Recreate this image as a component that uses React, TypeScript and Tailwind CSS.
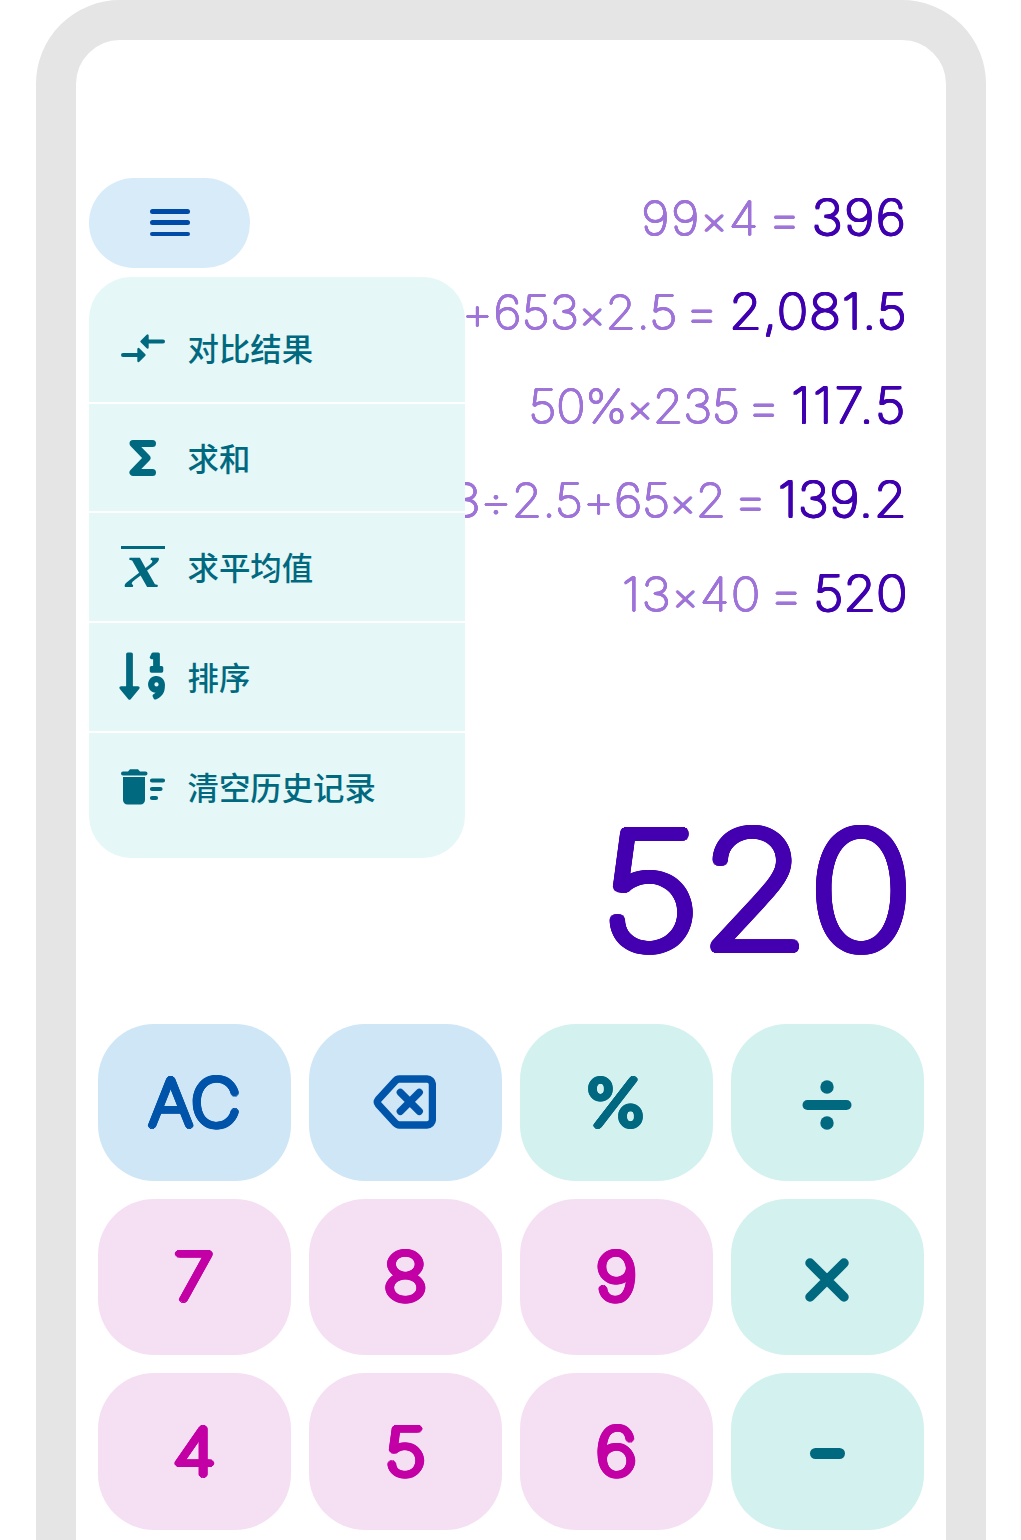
import type { ReactNode } from "react";
import { FaSortNumericDown } from "react-icons/fa";

type HistoryItem = { expr: string; result: string; exprTrack: string; resultTrack: string };

const history: HistoryItem[] = [
  { expr: "99×4", result: "396", exprTrack: "tracking-[1.700px]", resultTrack: "tracking-[1.600px]" },
  { expr: "+653×2.5", result: "2,081.5", exprTrack: "tracking-[0.200px]", resultTrack: "tracking-[0.900px]" },
  { expr: "50%×235", result: "117.5", exprTrack: "tracking-[-0.300px]", resultTrack: "tracking-[2.200px]" },
  { expr: "3÷2.5+65×2", result: "139.2", exprTrack: "tracking-[-0.200px]", resultTrack: "tracking-[0.700px]" },
  { expr: "13×40", result: "520", exprTrack: "tracking-[1.500px]", resultTrack: "tracking-[0px]" },
];

/** Thickens hairline glyphs evenly in every direction, which gives them rounded stroke ends. */
function roundedWeight(radius: number) {
  const rings = radius > 2.5 ? [radius, radius * 0.5] : [radius];
  const steps = radius > 4 ? 32 : radius > 2 ? 16 : 12;
  return rings
    .flatMap((r) =>
      Array.from({ length: steps }, (_, i) => {
        const a = (i / steps) * Math.PI * 2;
        return `${(Math.cos(a) * r).toFixed(2)}px ${(Math.sin(a) * r).toFixed(2)}px 0`;
      }),
    )
    .join(",");
}

const hairline = roundedWeight(0.95);
const regular = roundedWeight(1.3);
const medium = roundedWeight(3.2);
const display = roundedWeight(5.2);

function Expression({ value }: { value: string }) {
  return (
    <>
      {value.split(/([×÷+])/).filter(Boolean).map((part, i) =>
        part === "×" ? (
          <span key={i} className="inline-block -translate-y-px text-[38px]">×</span>
        ) : part === "+" || part === "÷" ? (
          <span key={i} className="inline-block translate-y-px">{part}</span>
        ) : (
          <span key={i}>{part}</span>
        ),
      )}
    </>
  );
}

function CompareIcon() {
  return (
    <svg width="46" height="32" viewBox="0 0 46 32" fill="currentColor" stroke="currentColor" strokeLinecap="round" strokeLinejoin="round">
      <path d="M26 9.500H43M3 23H20" strokeWidth="4" fill="none" />
      <path d="M21.500 9.500L27.500 3.500V15.500zM24.500 23L18.500 17V29z" strokeWidth="2.400" />
    </svg>
  );
}

function SumIcon() {
  return (
    <svg width="46" height="40" viewBox="0 0 46 40" fill="none" stroke="currentColor" strokeWidth="7" strokeLinecap="round" strokeLinejoin="round">
      <path d="M32.500 5.500H13L27 20L13 34.500H32.500" />
    </svg>
  );
}

function MeanIcon() {
  return (
    <span className="flex h-[42px] w-[44px] flex-col items-center border-t-[3.500px] border-current">
      <span className="-mt-[6px] inline-block scale-x-110 font-['Liberation_Serif',serif] text-[64px] font-bold italic leading-[46px]">x</span>
    </span>
  );
}

function TrashIcon() {
  return (
    <svg width="46" height="38" viewBox="0 0 46 38" fill="currentColor">
      <path d="M3 3.500H8L10 1.200H18L20 3.500H25.500a2 2 0 0 1 0 4H3a2 2 0 0 1 0-4z" />
      <path d="M3 9H25V32a4.500 4.500 0 0 1-4.500 4.500H7.500A4.500 4.500 0 0 1 3 32z" />
      <path d="M32 12.500H43M32 21H40.500M32 30H36" stroke="currentColor" strokeWidth="4.200" strokeLinecap="round" />
    </svg>
  );
}

const menu: { label: string; icon: ReactNode }[] = [
  { label: "对比结果", icon: <CompareIcon /> },
  { label: "求和", icon: <SumIcon /> },
  { label: "求平均值", icon: <MeanIcon /> },
  { label: "排序", icon: <FaSortNumericDown className="h-[54px] w-[48px] shrink-0 -translate-y-px" /> },
  { label: "清空历史记录", icon: <TrashIcon /> },
];

function BackspaceIcon() {
  return (
    <svg className="-translate-x-px" width="63" height="56" viewBox="0 0 63 56" fill="none" stroke="currentColor" strokeWidth="7.300" strokeLinecap="round" strokeLinejoin="round">
      <path d="M26.500 5H54a5.400 5.400 0 0 1 5.400 5.400V45.600a5.400 5.400 0 0 1-5.400 5.400H26.500a5 5 0 0 1-4-1.800L5.300 30.500a4 4 0 0 1 0-5L22.500 6.800a5 5 0 0 1 4-1.800z" />
      <path d="M27.300 18.300L46.300 37.300M46.300 18.300L27.300 37.300" />
    </svg>
  );
}

function DivideIcon() {
  return (
    <svg className="translate-y-[3px]" width="50" height="52" viewBox="0 0 50 52" fill="currentColor">
      <path d="M5.500 26H44.500" stroke="currentColor" strokeWidth="10" strokeLinecap="round" />
      <circle cx="25" cy="8" r="6.700" />
      <circle cx="25" cy="44" r="6.700" />
    </svg>
  );
}

function TimesIcon() {
  return (
    <svg className="translate-y-[3px]" width="46" height="46" viewBox="0 0 46 46" stroke="currentColor" strokeWidth="9.500" strokeLinecap="round">
      <path d="M6 6L40 40M40 6L6 40" />
    </svg>
  );
}

function MinusIcon() {
  return <span className="h-[11px] w-[35px] translate-y-[2px] rounded-full bg-current" />;
}

const blue = "bg-[#cee6f6] text-[#0054aa]";
const teal = "bg-[#d3f1ee] text-[#006980]";
const pink = "bg-[#f5e0f3] text-[#c300a5]";

const keys: { name: string; face: ReactNode; tone: string }[] = [
  { name: "clear", face: "AC", tone: blue },
  { name: "backspace", face: <BackspaceIcon />, tone: blue },
  { name: "percent", face: "%", tone: teal },
  { name: "divide", face: <DivideIcon />, tone: teal },
  { name: "7", face: "7", tone: pink },
  { name: "8", face: "8", tone: pink },
  { name: "9", face: "9", tone: pink },
  { name: "multiply", face: <TimesIcon />, tone: teal },
  { name: "4", face: "4", tone: pink },
  { name: "5", face: "5", tone: pink },
  { name: "6", face: "6", tone: pink },
  { name: "minus", face: <MinusIcon />, tone: teal },
];

export default function App() {
  return (
    <div className="flex h-[1540px] w-[1021px] justify-center overflow-hidden bg-white font-['Inter',sans-serif]">
      <div className="relative h-[1800px] w-[950px] shrink-0 rounded-[84px] border-[40px] border-[#e5e5e5]">
        <header className="flex h-[130px] items-end" />

        <button aria-label="menu" className="absolute left-[13px] top-[138px] flex h-[89.500px] w-[161px] flex-col items-center justify-center gap-[6.500px] rounded-full bg-[#d8ebf9] pl-px text-[#004ba8]">
          <span className="h-[4.800px] w-[40px] rounded-full bg-current" />
          <span className="h-[4.800px] w-[40px] rounded-full bg-current" />
          <span className="h-[4.800px] w-[40px] rounded-full bg-current" />
        </button>

        <section className="flex h-[470px] flex-col pr-[38.500px]">
          {history.map((h) => (
            <div key={h.result} className="flex h-[94px] origin-right scale-x-[1.07] items-baseline justify-end whitespace-nowrap pt-[16px] font-thin leading-[62px]">
              <span className={`text-[46.500px] text-[#9f74d9] ${h.exprTrack}`} style={{ textShadow: hairline }}>
                <Expression value={h.expr} />
              </span>
              <span className="ml-[6px] mr-[9px] translate-y-[2px] text-[52px] text-[#9f74d9]" style={{ textShadow: hairline }}>=</span>
              <span className={`text-[49.500px] text-[#4000b0] ${h.resultTrack}`} style={{ textShadow: regular }}>{h.result}</span>
            </div>
          ))}
        </section>

        <nav className="absolute left-[13px] top-[237px] flex w-[376px] flex-col rounded-[42px] bg-[#e5f7f7] pb-[17.700px] pt-[17px] text-[#006980]">
          {menu.map((m, i) => (
            <div key={m.label} className={`flex items-center pl-[31px] ${i < 4 ? "h-[109.700px] border-b-2 border-white" : "h-[108px]"}`}>
              <span className="flex w-[46px] shrink-0 justify-center">{m.icon}</span>
              <span className="ml-[22px] font-['Noto_Sans_CJK_SC',sans-serif] text-[31.400px] font-medium leading-[46px]">{m.label}</span>
            </div>
          ))}
        </nav>

        <section className="flex h-[384px] items-end justify-end pr-[32px]">
          <div className="mb-[49px] origin-right scale-x-[1.1] text-[160px] font-thin leading-[170px] text-[#4400b0]" style={{ textShadow: display }}>520</div>
        </section>

        <section className="grid grid-cols-4 gap-[18px] px-[22px]">
          {keys.map((k) => (
            <button key={k.name} aria-label={k.name} className={`flex h-[156.500px] items-center justify-center rounded-[56px] text-[65px] font-thin leading-none ${k.tone}`}>
              {typeof k.face === "string" ? (
                <span className={`inline-block ${k.face === "AC" ? "translate-x-px scale-x-[1.05]" : "scale-x-[1.12]"}`} style={{ textShadow: medium }}>{k.face}</span>
              ) : (
                k.face
              )}
            </button>
          ))}
        </section>
      </div>
    </div>
  );
}
